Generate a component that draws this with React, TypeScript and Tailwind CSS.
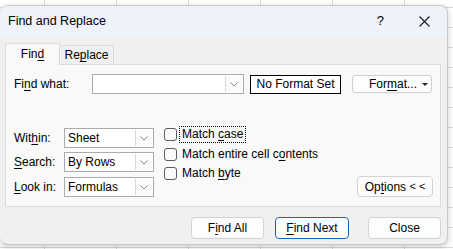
import React from "react";

const Chevron = () => (
  <svg width="8" height="5" viewBox="0 0 8 5">
    <polyline points="0.5,0.5 4,4 7.5,0.5" fill="none" stroke="#8a8a8a" strokeWidth="1" />
  </svg>
);

function Dropdown({ value, width }: { value: string; width: string }) {
  return (
    <div className={`flex h-[20px] items-stretch border border-[#ababab] bg-white ${width}`}>
      <div className="flex flex-1 items-center pl-[3px] leading-none">{value}</div>
      <div className="my-px mr-px flex w-[17px] items-center justify-center border-l border-[#d9d9d9] bg-[#fbfbfb]">
        <Chevron />
      </div>
    </div>
  );
}

function Check({ children, focused }: { children: React.ReactNode; focused?: boolean }) {
  return (
    <div className="flex h-[13px] items-center">
      <div className="h-[13px] w-[13px] rounded-[3px] border border-[#5c5c5c] bg-[#fbfbfb]" />
      <span
        className={`ml-[3px] px-[2px] leading-[15px] ${
          focused ? "outline outline-1 outline-dotted outline-black" : ""
        }`}
      >
        {children}
      </span>
    </div>
  );
}

function Btn({ children, primary, w }: { children: React.ReactNode; primary?: boolean; w: string }) {
  return (
    <div
      className={`flex h-[22px] items-center justify-center rounded-[4px] border bg-[#fdfdfd] ${w} ${
        primary ? "border-[#1b64b8]" : "border-[#d2d2d2]"
      }`}
    >
      {children}
    </div>
  );
}

export default function App() {
  return (
    <div className="h-[249px] w-[453px] overflow-hidden bg-white bg-[linear-gradient(to_right,#d9d9d9_1px,transparent_1px),linear-gradient(to_bottom,#d9d9d9_1px,transparent_1px)] bg-size-[72px_20px] bg-position-[44px_7px] pt-[5px] font-['Segoe_UI','Liberation_Sans',sans-serif] text-[12px] text-black">
      {/* Dialog */}
      <div className="flex h-[240px] w-[448px] flex-col overflow-hidden rounded-[8px] border border-l-0 border-[#c8c8c8] bg-[#f0f0f0] shadow-[0_2px_6px_rgba(0,0,0,0.2)]">
        {/* Title bar */}
        <div className="flex h-[30px] items-center bg-[#eef2f9] pl-[8px]">
          <span className="text-[12.5px]">Find and Replace</span>
          <span className="ml-auto mr-[35px] text-[13px]">?</span>
          <svg width="11" height="11" viewBox="0 0 11 11" className="mr-[17px]">
            <path d="M0.5 0.5 L10.5 10.5 M10.5 0.5 L0.5 10.5" stroke="#1a1a1a" strokeWidth="1.1" />
          </svg>
        </div>

        {/* Tabs */}
        <div className="mt-[7px] flex items-end pl-[5px]">
          <div className="relative z-10 -mb-px flex h-[22px] w-[55px] items-center justify-center border border-b-0 border-[#dcdcdc] bg-[#f9f9f9] pb-[1px]">
            Fin<u className="underline-offset-2">d</u>
          </div>
          <div className="flex h-[19px] w-[54px] items-center justify-center border border-b-0 border-l-0 border-[#dcdcdc] bg-[#f0f0f0]">
            Re<u className="underline-offset-2">p</u>lace
          </div>
        </div>

        {/* Panel */}
        <div className="ml-[5px] flex h-[143px] w-[436px] flex-col border border-[#dcdcdc] bg-[#f9f9f9]">
          <div className="mt-[9px] flex items-center pl-[8px]">
            <div className="w-[78px]">
              Fi<u className="underline-offset-2">n</u>d what:
            </div>
            <Dropdown value="" width="w-[152px]" />
            <div className="ml-[6px] flex h-[19px] w-[91px] items-center justify-center border border-black bg-white">
              No Format Set
            </div>
            <div className="ml-[11px] flex h-[18px] w-[80px] items-center rounded-[3px] border border-[#d0d0d0] bg-[#fdfdfd] pl-[16px]">
              <span>
                For<u className="underline-offset-2">m</u>at...
              </span>
              <svg width="6" height="3" viewBox="0 0 6 3" className="ml-auto mr-[3px]">
                <polygon points="0,0 6,0 3,3" fill="#222" />
              </svg>
            </div>
          </div>

          <div className="mt-[34px] flex flex-1 pl-[8px] pr-[7px]">
            <div className="flex flex-col gap-[4px]">
              <div className="flex items-center">
                <div className="w-[50px]">
                  Wit<u className="underline-offset-2">h</u>in:
                </div>
                <Dropdown value="Sheet" width="w-[90px]" />
              </div>
              <div className="flex items-center">
                <div className="w-[50px]">
                  <u className="underline-offset-2">S</u>earch:
                </div>
                <Dropdown value="By Rows" width="w-[90px]" />
              </div>
              <div className="mt-px flex items-center">
                <div className="w-[50px]">
                  <u className="underline-offset-2">L</u>ook in:
                </div>
                <Dropdown value="Formulas" width="w-[90px]" />
              </div>
            </div>

            <div className="ml-[10px] flex flex-col gap-[6.5px]">
              <Check focused>
                Match <u className="underline-offset-2">c</u>ase
              </Check>
              <Check>
                Match entire cell c<u className="underline-offset-2">o</u>ntents
              </Check>
              <Check>
                Match <u className="underline-offset-2">b</u>yte
              </Check>
            </div>

            <div className="ml-auto mb-[9px] flex h-[21px] w-[76px] items-center justify-center self-end rounded-[4px] border border-[#d2d2d2] bg-[#fdfdfd]">
              Op<u className="underline-offset-2">t</u>ions&nbsp;<span className="text-[11px]">&lt; &lt;</span>
            </div>
          </div>
        </div>

        {/* Buttons */}
        <div className="mt-[10px] flex items-center justify-end pr-[6px]">
          <Btn w="w-[73px]">
            F<u className="underline-offset-2">i</u>nd All
          </Btn>
          <div className="ml-[11px]">
            <Btn w="w-[74px]" primary>
              <u className="underline-offset-2">F</u>ind Next
            </Btn>
          </div>
          <div className="ml-[19px]">
            <Btn w="w-[73px]">Close</Btn>
          </div>
        </div>
      </div>
    </div>
  );
}
